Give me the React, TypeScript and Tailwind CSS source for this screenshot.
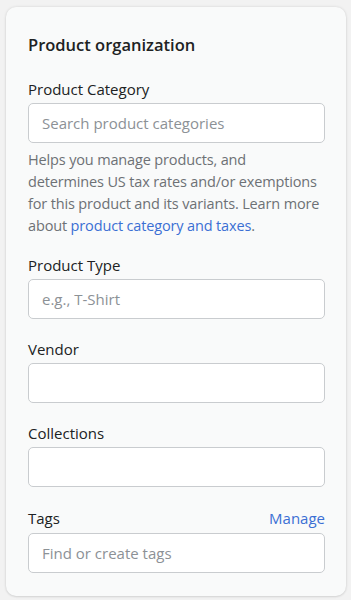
const fields = [
  { label: 'Product Type', placeholder: 'e.g., T-Shirt' },
  { label: 'Vendor', placeholder: '' },
  { label: 'Collections', placeholder: '' },
]

function TextField({ placeholder }: { placeholder: string }) {
  return (
    <input
      type="text"
      placeholder={placeholder}
      className="block h-[40px] w-full rounded-[5px] border border-[#c9cccf] bg-white px-[13px] text-[15px] text-[#202223] outline-none placeholder:text-[#8c9196]"
    />
  )
}

export default function App() {
  return (
    <div
      className="min-h-[600px] bg-[#f2f2f2] pt-[7px] pr-[5px] pb-[5px] pl-[6px]"
      style={{ fontFamily: '"Open Sans", "Noto Sans", sans-serif' }}
    >
      <div className="rounded-[10px] bg-[#f9fafa] pt-[25px] pr-[21px] pb-[23px] pl-[22px] shadow-[0_0_3px_rgba(0,0,0,0.12),0_1px_2px_rgba(0,0,0,0.08)]">
        {/* Header */}
        <h2 className="text-[16.5px] font-semibold leading-[26px] text-[#202223]">Product organization</h2>

        {/* Category */}
        <div className="mt-[21px]">
          <label className="mb-[4px] block text-[15px] leading-[20px] text-[#202223]">Product Category</label>
          <TextField placeholder="Search product categories" />
          <p className="mt-[6px] text-[14.5px] leading-[22px] tracking-[-0.15px] text-[#6d7175]">
            Helps you manage products, and determines US tax rates and/or exemptions for this product and its variants. Learn more about{' '}
            <a href="#" className="text-[#3b6fd4]">product category and taxes</a>.
          </p>
        </div>

        {/* Simple fields */}
        {fields.map((f, i) => (
          <div key={f.label} className={i === 0 ? 'mt-[18px]' : 'mt-[20px]'}>
            <label className="mb-[4px] block text-[15px] leading-[20px] text-[#202223]">{f.label}</label>
            <TextField placeholder={f.placeholder} />
          </div>
        ))}

        {/* Tags */}
        <div className="mt-[21px]">
          <div className="mb-[5px] flex items-center justify-between">
            <label className="text-[15px] leading-[20px] text-[#202223]">Tags</label>
            <a href="#" className="text-[15px] leading-[20px] text-[#3b6fd4]">Manage</a>
          </div>
          <TextField placeholder="Find or create tags" />
        </div>
      </div>
    </div>
  )
}
